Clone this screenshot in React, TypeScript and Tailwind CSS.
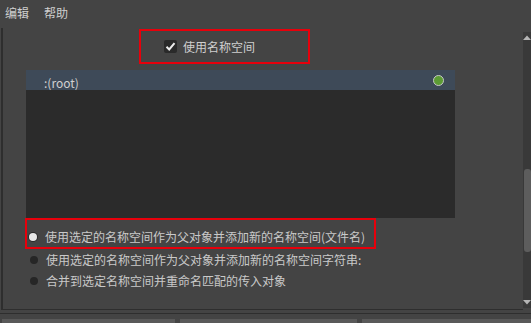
const font = { fontFamily: '"Noto Sans CJK SC", "Noto Sans", sans-serif' }

const options = [
  "使用选定的名称空间作为父对象并添加新的名称空间(文件名)",
  "使用选定的名称空间作为父对象并添加新的名称空间字符串:",
  "合并到选定名称空间并重命名匹配的传入对象",
]

function Radio({ on }: { on?: boolean }) {
  return (
    <span
      className={`w-[8px] h-[8px] rounded-full shrink-0 ${
        on ? "bg-[#e6e6e6] ring-1 ring-[#2a2a2a]" : "bg-[#262626]"
      }`}
    />
  )
}

export default function App() {
  return (
    <div
      className="w-[531px] h-[323px] bg-[#444444] overflow-hidden flex flex-col text-[12px] text-[#c9c9c9] leading-none"
      style={font}
    >
      {/* Menu */}
      <div className="h-[28px] flex items-center gap-[15px] pl-[5px] pb-[2px] text-[#cfcfcf]">
        <span>编辑</span>
        <span>帮助</span>
      </div>

      <div className="flex h-[282px]">
        {/* Panel */}
        <div className="w-[522px] ml-[1px] border-l-2 border-b border-[#2e2e2e] flex flex-col pt-[1px]">
          <div className="ml-[136px] w-[171px] h-[35px] border-2 border-red-600 flex items-center gap-[6px] pl-[23px]">
            <span className="w-[13px] h-[13px] rounded-[2px] bg-[#2a2a2a] flex items-center justify-center">
              <svg width="11" height="11" viewBox="0 0 11 11">
                <polyline points="1.5,5.8 4.2,8.5 9.5,2.2" fill="none" stroke="#eeeeee" strokeWidth="2" />
              </svg>
            </span>
            <span className="text-[#cfcfcf]">使用名称空间</span>
          </div>

          {/* Namespace list */}
          <div className="mt-[6px] ml-[23px] w-[429px] h-[148px] flex flex-col">
            <div className="h-[20px] bg-[#3e4a58] flex items-center justify-between pl-[18px] pr-[11px]">
              <span className="text-[#d0d0d0] pt-[5px]">:(root)</span>
              <span className="w-[11px] h-[11px] rounded-full bg-[#5c9b34] border border-[#c8c8c8]" />
            </div>
            <div className="flex-1 bg-[#2b2b2b]" />
          </div>

          {/* Options */}
          <div className="ml-[22px] w-[351px] h-[31px] border-2 border-red-600 pt-[6px]">
            <div className="h-[21px] flex items-center gap-[8px] pl-[2px]">
              <Radio on />
              <span>{options[0]}</span>
            </div>
          </div>
          {options.slice(1).map((o) => (
            <div key={o} className="h-[21px] flex items-center gap-[8px] ml-[26px] pl-[1px]">
              <Radio />
              <span>{o}</span>
            </div>
          ))}
        </div>

        {/* Scrollbar */}
        <div className="w-[8px] mt-[4px] h-[276px] bg-[#393939] flex flex-col items-center">
          <svg width="8" height="6" viewBox="0 0 8 6" className="mt-[3px]">
            <polygon points="4,0.5 8,5 0,5" fill="#b5b5b5" />
          </svg>
          <div className="mt-[128px] w-[7px] ml-[1px] h-[83px] rounded-[3px] bg-[#5d5d5d]" />
          <div className="flex-1" />
          <svg width="8" height="6" viewBox="0 0 8 6" className="mb-[3px]">
            <polygon points="0,1 8,1 4,5.5" fill="#b5b5b5" />
          </svg>
        </div>
      </div>

      <div className="h-[3px]" />
      <div className="h-[1px] bg-[#2e2e2e]" />
      <div className="h-[5px]" />
      <div className="flex-1 flex gap-[5px] pl-[2px]">
        <div className="w-[173px] bg-[#595959]" />
        <div className="w-[177px] bg-[#595959]" />
        <div className="flex-1 bg-[#595959]" />
      </div>
    </div>
  )
}
